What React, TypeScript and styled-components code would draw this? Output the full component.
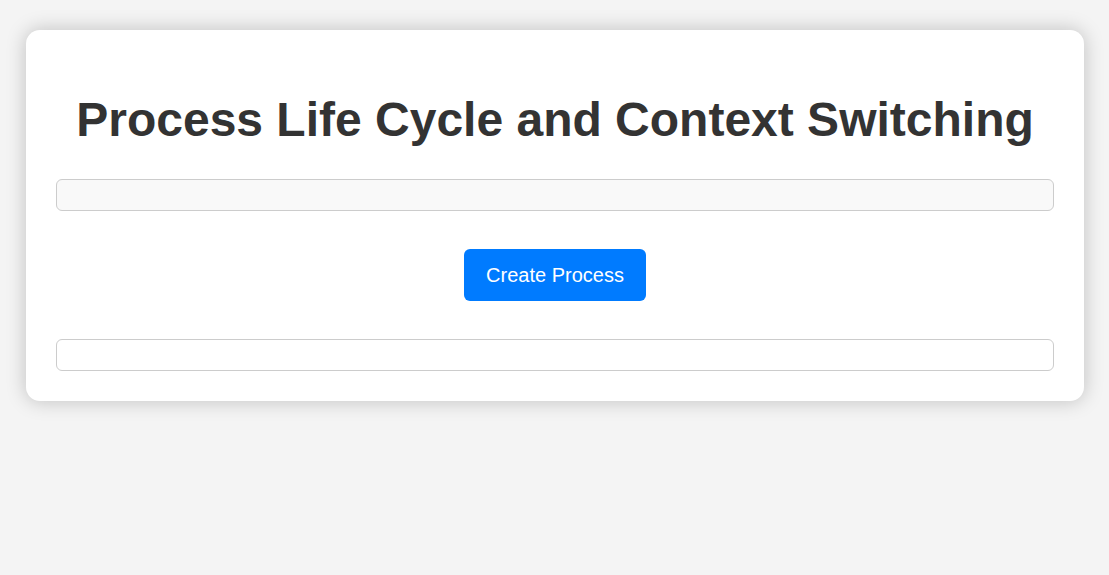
import React from "react";
import styled, { createGlobalStyle } from "styled-components";

const Global = createGlobalStyle`
  html, body { margin: 0; padding: 0; background: #f4f4f4; }
  body { font-family: "Liberation Sans", Arial, sans-serif; }
`;

const Page = styled.div`
  padding: 30px 25px 30px 26px;
`;

const Card = styled.div`
  background: #fff;
  border-radius: 14px;
  box-shadow: 0 0 20px rgba(0, 0, 0, 0.22);
  padding: 30px;
  display: flow-root;
`;

const Title = styled.h1`
  margin: 32px 0;
  font-size: 48px;
  font-weight: bold;
  color: #333;
  text-align: center;
`;

const Panel = styled.div<{ $bg: string }>`
  height: 30px;
  border: 1px solid #ccc;
  border-radius: 6px;
  background: ${(p) => p.$bg};
`;

const Actions = styled.div`
  display: flex;
  justify-content: center;
  margin: 38px 0;
`;

const Button = styled.button`
  height: 52px;
  padding: 0 22px;
  border: none;
  border-radius: 6px;
  background: #007bff;
  color: #fff;
  font-family: "Liberation Sans", Arial, sans-serif;
  font-size: 20px;
  cursor: pointer;
`;

export default function App() {
  return (
    <>
      <Global />
      <Page>
        <Card>
          <Title>Process Life Cycle and Context Switching</Title>
          <Panel $bg="#f9f9f9" />
          <Actions>
            <Button>Create Process</Button>
          </Actions>
          <Panel $bg="#fff" />
        </Card>
      </Page>
    </>
  );
}
